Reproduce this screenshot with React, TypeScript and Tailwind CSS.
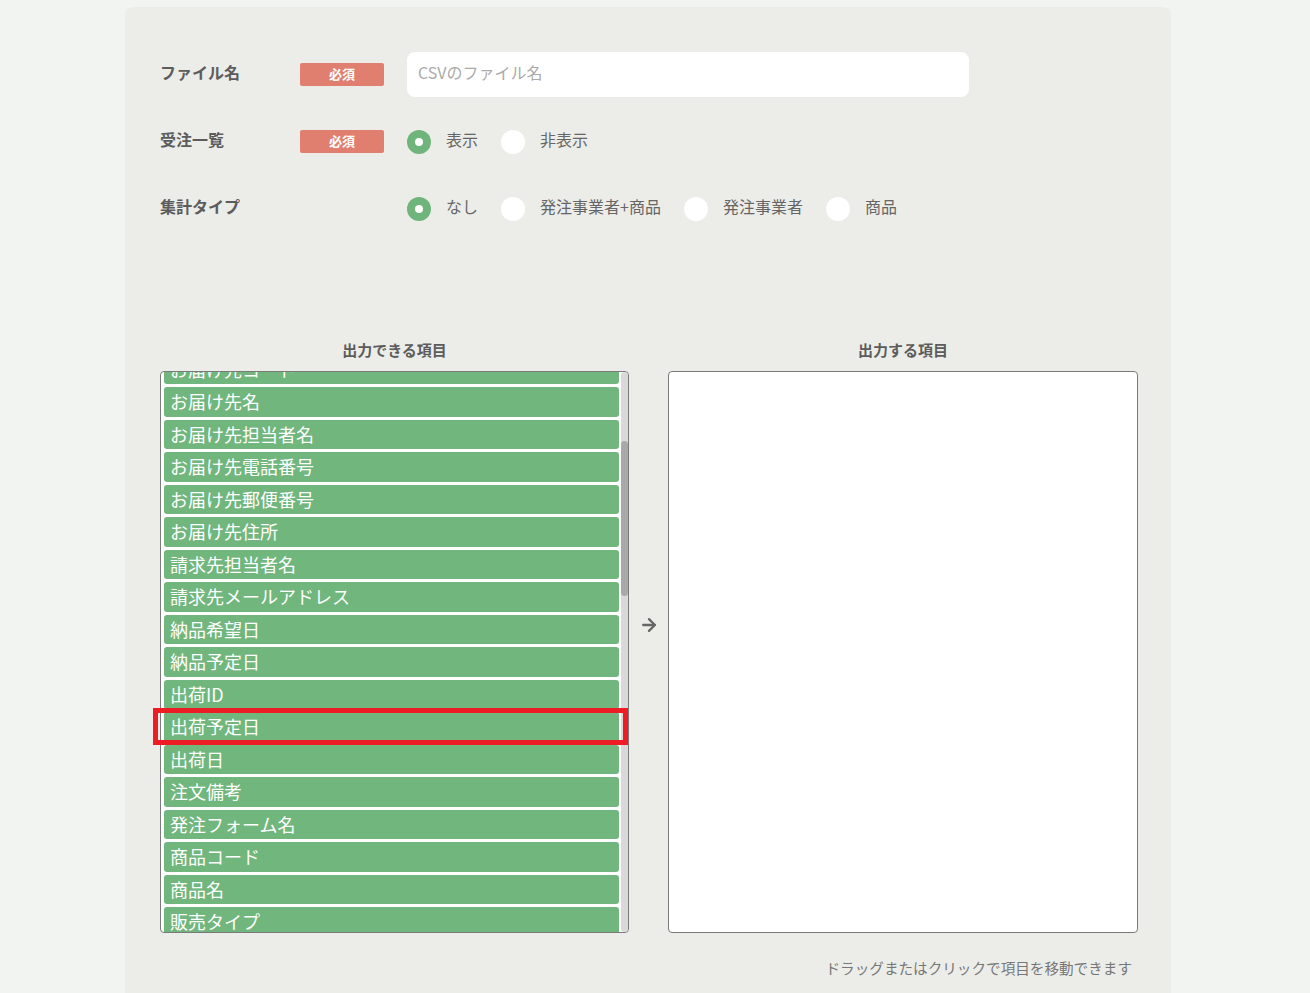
import { useLayoutEffect, useRef } from 'react';
import { ArrowRight } from 'lucide-react';

const availableItems = [
  '受注ID',
  '受注番号',
  '受注日時',
  '発注事業者コード',
  '発注事業者名',
  '発注者名',
  '受注ステータス',
  'お届け先コード',
  'お届け先名',
  'お届け先担当者名',
  'お届け先電話番号',
  'お届け先郵便番号',
  'お届け先住所',
  '請求先担当者名',
  '請求先メールアドレス',
  '納品希望日',
  '納品予定日',
  '出荷ID',
  '出荷予定日',
  '出荷日',
  '注文備考',
  '発注フォーム名',
  '商品コード',
  '商品名',
  '販売タイプ',
  '規格',
  '数量',
  '単位',
  '単価',
  '小計',
  '税率',
  '消費税額',
  '合計金額',
  '送料',
  '手数料',
  '値引き額',
  '支払方法',
  '支払期限',
  '入金日',
  '入金ステータス',
  '配送方法',
  '配送業者',
  '送り状番号',
  '配送時間帯',
  '出荷ステータス',
  '在庫引当',
  '倉庫名',
  'JANコード',
  '商品カテゴリ',
  '賞味期限',
  'ロット番号',
  '備考1',
  '備考2',
  '備考3',
  '社内メモ',
  '作成日時',
  '更新日時',
  '作成者',
  '更新者',
  '承認者',
  '承認日',
  'キャンセル日',
];

const font = { fontFamily: '"Noto Sans CJK JP", "Noto Sans", sans-serif' };

// list metrics
const SCROLL_TOP = 247;
const VIEW_H = 560;
const CONTENT_H = 2 + availableItems.length * 32.5;

function Badge() {
  return (
    <span className="flex h-[23px] w-[84px] items-center justify-center rounded-[2px] bg-[#e07f70] pb-[2px] text-[13px] font-bold text-white">
      必須
    </span>
  );
}

function Radio({ label, checked }: { label: string; checked?: boolean }) {
  return (
    <label className="mr-[23px] flex items-center">
      <span
        className={`flex h-[24px] w-[24px] items-center justify-center rounded-full ${
          checked ? 'bg-[#6fb47b]' : 'bg-white'
        }`}
      >
        {checked && <span className="h-[8px] w-[8px] rounded-full bg-white" />}
      </span>
      <span className="ml-[15px] pb-[5px] text-[16px] text-[#666]">{label}</span>
    </label>
  );
}

export default function App() {
  const listRef = useRef<HTMLDivElement>(null);

  useLayoutEffect(() => {
    if (listRef.current) listRef.current.scrollTop = SCROLL_TOP;
  }, []);

  const thumbH = (VIEW_H * VIEW_H) / CONTENT_H;
  const thumbTop = (SCROLL_TOP / CONTENT_H) * VIEW_H;

  return (
    <div className="min-h-[993px] bg-[#f2f4f2] px-[125px] pt-[7px]" style={font}>
      <div className="h-[986px] w-[1046px] overflow-hidden rounded-t-[8px] bg-[#ecede9] pl-[35px] pr-[33px] pt-[45px]">
        {/* Settings rows */}
        <div className="flex flex-col gap-[22px]">
          <div className="flex h-[45px] items-center">
            <div className="w-[140px] pb-[5px] text-[16px] font-bold text-[#5c5c5c]">ファイル名</div>
            <Badge />
            <input
              className="ml-[23px] h-[45px] w-[562px] rounded-[8px] bg-white px-[11px] pb-[5px] text-[16px] text-[#555] outline-none placeholder:text-[#aaa]"
              placeholder="CSVのファイル名"
            />
          </div>
          <div className="flex h-[45px] items-center">
            <div className="w-[140px] pb-[5px] text-[16px] font-bold text-[#5c5c5c]">受注一覧</div>
            <Badge />
            <div className="ml-[23px] flex items-center">
              <Radio label="表示" checked />
              <Radio label="非表示" />
            </div>
          </div>
          <div className="flex h-[45px] items-center">
            <div className="w-[247px] pb-[5px] text-[16px] font-bold text-[#5c5c5c]">集計タイプ</div>
            <div className="flex items-center">
              <Radio label="なし" checked />
              <Radio label="発注事業者+商品" />
              <Radio label="発注事業者" />
              <Radio label="商品" />
            </div>
          </div>
        </div>

        {/* Column selector */}
        <div className="mt-[107px] flex">
          <div className="w-[469px]">
            <div className="h-[24px] text-center text-[15px] font-bold leading-[24px] text-[#5c5c5c]">
              出力できる項目
            </div>
            <div className="relative mt-[9px]">
              <div className="flex h-[562px] overflow-hidden rounded-[4px] border border-[#7a7a7a] bg-white">
                <div ref={listRef} className="flex-1 overflow-hidden pl-[3px] pr-[2px] pt-[2px]">
                  {availableItems.map((item) => (
                    <div
                      key={item}
                      className="mb-[3px] h-[29.5px] cursor-pointer truncate rounded-[3px] bg-[#70b67d] pl-[6px] text-[18px] leading-[28px] text-white"
                    >
                      {item}
                    </div>
                  ))}
                </div>
                {/* scrollbar */}
                <div className="w-[7px] rounded-full bg-[#d9d9d9]">
                  <div
                    className="rounded-full bg-[#a9a9a9]"
                    style={{ marginTop: thumbTop, height: thumbH }}
                  />
                </div>
              </div>
              {/* annotation */}
              <div className="pointer-events-none absolute left-[-7px] top-[337px] h-[37px] w-[475px] border-[5px] border-[#ee1c25]" />
            </div>
          </div>

          <div className="flex w-[39px] items-center justify-center pb-[21px]">
            <ArrowRight size={20} strokeWidth={2.75} className="text-[#666]" />
          </div>

          <div className="w-[470px]">
            <div className="h-[24px] text-center text-[15px] font-bold leading-[24px] text-[#5c5c5c]">
              出力する項目
            </div>
            <div className="mt-[9px] h-[562px] rounded-[4px] border border-[#7a7a7a] bg-white" />
          </div>
        </div>

        <p className="mt-[24px] pr-[6px] text-right text-[14.6px] text-[#777]">
          ドラッグまたはクリックで項目を移動できます
        </p>
      </div>
    </div>
  );
}
